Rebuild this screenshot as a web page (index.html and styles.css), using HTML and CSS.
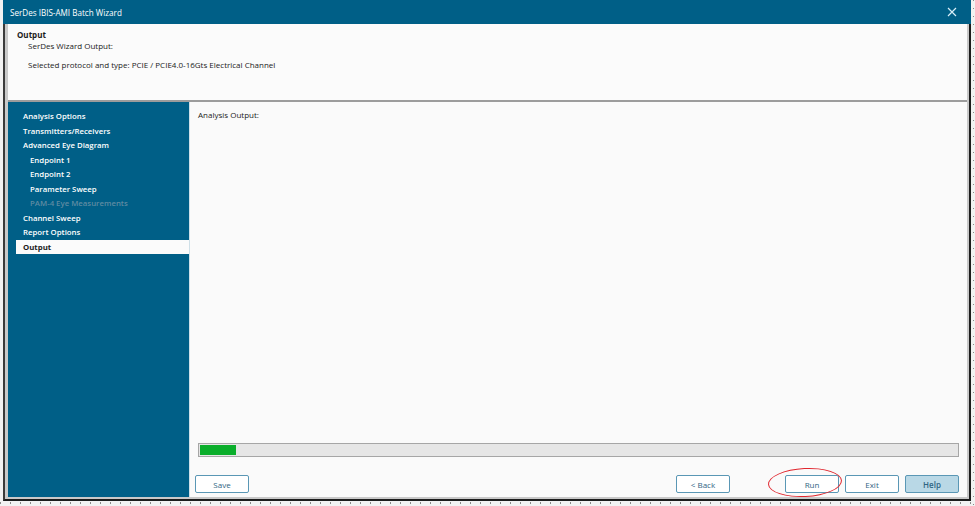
FILE: index.html
```html
<!DOCTYPE html>
<html>
<head>
<meta charset="utf-8">
<link rel="stylesheet" href="styles.css">
</head>
<body>
<div class="window">
  <div class="titlebar">
    <span class="title">SerDes IBIS-AMI Batch Wizard</span>
    <svg class="close" width="10" height="10" viewBox="0 0 10 10"><path d="M1 1 L9 9 M9 1 L1 9" stroke="#d8eef8" stroke-width="1.2" fill="none"/></svg>
  </div>
  <div class="frame">
    <div class="header">
      <div class="h-title">Output</div>
      <div class="h-sub">SerDes Wizard Output:</div>
      <div class="h-proto">Selected protocol and type: PCIE / PCIE4.0-16Gts Electrical Channel</div>
    </div>
    <div class="main">
      <nav class="sidebar">
        <ul class="nav">
          <li>Analysis Options</li>
          <li>Transmitters/Receivers</li>
          <li>Advanced Eye Diagram</li>
          <li class="sub">Endpoint 1</li>
          <li class="sub">Endpoint 2</li>
          <li class="sub">Parameter Sweep</li>
          <li class="sub disabled">PAM-4 Eye Measurements</li>
          <li>Channel Sweep</li>
          <li>Report Options</li>
          <li class="active">Output</li>
        </ul>
      </nav>
      <section class="content">
        <div class="label">Analysis Output:</div>
        <div class="spacer"></div>
        <div class="progress"><div class="fill" style="width:36px"></div></div>
        <div class="buttons">
          <button class="btn">Save</button>
          <div class="grow"></div>
          <button class="btn back">&lt; Back</button>
          <button class="btn run">Run<span class="circle"></span></button>
          <button class="btn">Exit</button>
          <button class="btn help">Help</button>
        </div>
      </section>
    </div>
  </div>
</div>
</body>
</html>
```
FILE: styles.css
```css
html, body {
  margin: 0;
  padding: 0;
}
body {
  width: 975px;
  height: 506px;
  overflow: hidden;
  background-color: #f2f2f2;
  background-image:
    repeating-linear-gradient(to bottom, #8a8a8a 0 1px, transparent 1px 8px),
    repeating-linear-gradient(to right, #8a8a8a 0 1px, transparent 1px 10px);
  background-size: 1px 100%, 100% 2px;
  background-position: 973px 0, 0 502px;
  background-repeat: no-repeat;
  font-family: "Open Sans", "Noto Sans", sans-serif;
  font-size: 8px;
  color: #1a1a1a;
  box-sizing: border-box;
  padding-left: 3px;
}
.window {
  width: 968px;
  height: 501px;
  display: flex;
  flex-direction: column;
}
.titlebar {
  height: 24px;
  flex: none;
  background: #005f87;
  display: flex;
  align-items: center;
  justify-content: space-between;
  padding: 0 14px 0 7px;
  color: #ffffff;
}
.title {
  font-size: 8.1px;
}
.close {
  display: block;
}
.frame {
  flex: 1;
  display: flex;
  flex-direction: column;
  border-left: 2px solid #3a3a3a;
  border-right: 2px solid #1c1c1c;
  border-bottom: 2px solid #1c1c1c;
  background: #c9c9c9;
  padding: 0 2px 2px 3px;
}
.header {
  height: 70px;
  flex: none;
  background: #fbfbfb;
  border-bottom: 2px solid #9c9c9c;
  padding: 6px 9px 0;
  box-sizing: content-box;
}
.h-title {
  font-weight: 700;
  line-height: 10px;
}
.h-sub {
  padding-left: 11px;
  line-height: 12px;
}
.h-proto {
  padding-left: 11px;
  margin-top: 7px;
  line-height: 12px;
}
.main {
  flex: 1;
  display: flex;
}
.sidebar {
  width: 181px;
  flex: none;
  background: #005f87;
  border-right: 1px solid #cfe0e8;
  padding-top: 7px;
}
.nav {
  list-style: none;
  margin: 0 0 0 8px;
  padding: 0;
}
.nav li {
  height: 14.5px;
  line-height: 14.5px;
  padding-left: 7px;
  color: #ffffff;
  font-size: 7.8px;
  font-weight: 600;
  white-space: nowrap;
}
.nav li.sub {
  padding-left: 14px;
}
.nav li.disabled {
  color: #5f8ba2;
}
.nav li.active {
  background: #fbfbfb;
  color: #1a1a1a;
  font-weight: 700;
}
.content {
  flex: 1;
  background: #fafafa;
  display: flex;
  flex-direction: column;
  padding: 7px 8px 4px 8px;
}
.label {
  line-height: 11px;
}
.spacer {
  flex: 1;
}
.progress {
  border: 1px solid #a6a6a6;
  background: #e6e6e6;
  padding: 1px;
  box-sizing: content-box;
  height: 10px;
}
.fill {
  height: 10px;
  background: #0aae2b;
}
.buttons {
  display: flex;
  margin-top: 18px;
  margin-left: -3px;
  gap: 6px;
}
.grow {
  flex: 1;
}
.btn {
  width: 54px;
  height: 18px;
  border: 1px solid #5a97b5;
  border-radius: 2px;
  background: #ffffff;
  color: #2f6583;
  font-family: "Open Sans", "Noto Sans", sans-serif;
  font-size: 8px;
  padding: 0;
  position: relative;
}
.btn.back {
  margin-right: 49px;
}
.btn.help {
  background: #b9d8e6;
  font-weight: 600;
}
.circle {
  position: absolute;
  left: -18px;
  top: -8px;
  width: 74px;
  height: 29px;
  border: 1.3px solid #e0262e;
  border-radius: 50%;
  box-sizing: border-box;
  transform: rotate(-3deg);
}
```
